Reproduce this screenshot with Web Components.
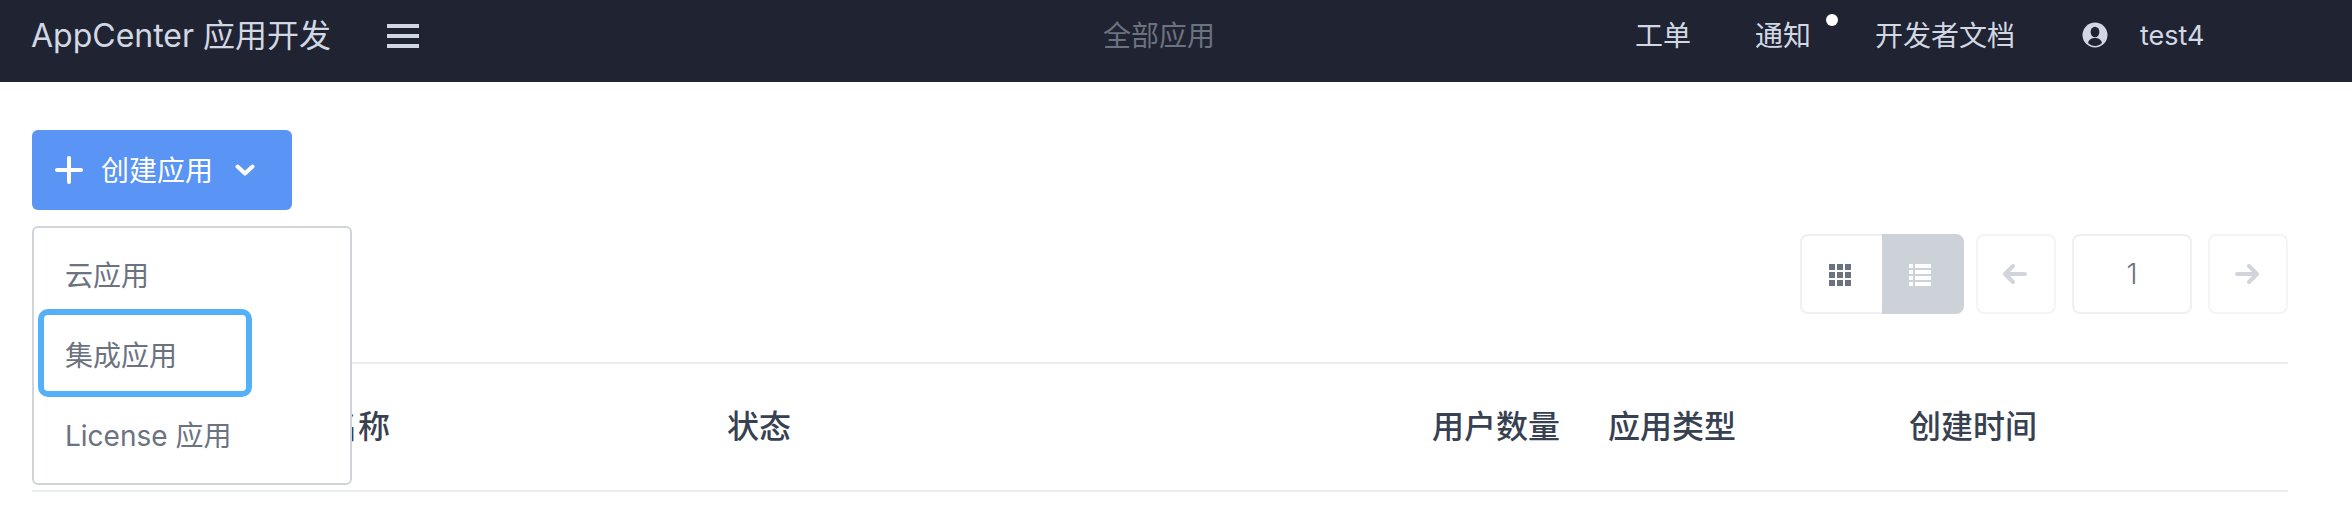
<!DOCTYPE html>
<html lang="zh"><head><meta charset="utf-8"><title>AppCenter</title>
<style>
html,body{margin:0;padding:0;background:#fff;font-family:Inter,"Noto Sans CJK SC",sans-serif;overflow:hidden}
</style></head><body>
<app-shell>
<top-bar slot="top" brand="AppCenter 应用开发" center="全部应用" user="test4"></top-bar>
<create-menu slot="main" label="创建应用"></create-menu>
<app-toolbar slot="main"></app-toolbar>
<app-table slot="main"></app-table>
</app-shell>
<script>
const def=(name,css,html,extra)=>{customElements.define(name,class extends HTMLElement{
connectedCallback(){if(this.shadowRoot)return;const r=this.attachShadow({mode:'open'});
const a=n=>this.getAttribute(n)||'';r.innerHTML='<style>'+css+'</style>'+html(a);}})};

def('app-shell',`:host{display:block;width:2352px;height:506px;overflow:hidden}
main{padding:48px 64px 0 32px;position:relative}`,
()=>`<slot name="top"></slot><main><slot name="main"></slot></main>`);

def('top-bar',`:host{display:flex;align-items:flex-start;height:82px;background:#202331;color:#d1d8e4;box-sizing:border-box;font-size:28px;line-height:34px;padding:18px 0 0 31px}
.brand{width:356px;flex:none;white-space:nowrap;font-size:32px;line-height:36px}
.burger{flex:none;width:32px;height:24px;margin:6px 0 0;display:block}
.center{flex:none;margin-left:684px;color:#6b7280;width:532px;margin-top:1px}
.links{display:flex;align-items:flex-start;margin-top:1px}
.l{flex:none;position:relative;white-space:nowrap}
.dot{position:absolute;left:71px;top:-5px;width:12px;height:12px;border-radius:50%;background:#fff}
.u{flex:none;margin:3px 0 0 67px;display:block}
.name{font-size:27px;margin-left:32px}`,
a=>`<span class="brand">${a('brand')}</span>
<svg class="burger" viewBox="0 0 32 24"><path d="M0 0h32v4H0zM0 10h32v4H0zM0 20h32v4H0z" fill="#d1d8e4"/></svg>
<span class="center">${a('center')}</span>
<div class="links"><span class="l">工单</span><span class="l" style="margin-left:64px">通知<i class="dot"></i></span><span class="l" style="margin-left:64px">开发者文档</span>
<svg class="u" width="26" height="26" viewBox="0 0 26 26"><circle cx="13" cy="13" r="12.5" fill="#d1d8e4"/><ellipse cx="13" cy="10" rx="4.4" ry="5.2" fill="#202331"/><path d="M6 21c1-4 4-5 7-5s6 1 7 5c-2 2-4.500 3-7 3s-5-1-7-3z" fill="#202331"/></svg>
<span class="l name">${a('user')}</span></div>`);

def('create-menu',`:host{display:block;position:relative;height:80px}
button{display:flex;align-items:center;width:260px;height:80px;box-sizing:border-box;border:0;border-radius:6px;background:#5a94f5;color:#fff;font:28px/34px Inter,"Noto Sans CJK SC",sans-serif;padding:0 0 0 23px}
.lab{margin:2px 22px 0 18px}
.menu{position:absolute;z-index:2;left:0;top:96px;width:320px;height:259px;box-sizing:border-box;border:2px solid #d1d5db;border-radius:6px;background:#fff;padding:1px 0 0 4px;color:#6b7280;font-size:28px;line-height:34px}
.it{box-sizing:border-box;width:214px;height:88px;padding:6px 0 0 21px;display:flex;align-items:center;margin-bottom:-8px;white-space:nowrap;border:6px solid transparent;border-radius:10px}
.on{border-color:#55b0fa}`,
a=>`<button><svg width="28" height="28" viewBox="0 0 28 28"><path d="M14 2v24M2 14h24" stroke="#fff" stroke-width="4" stroke-linecap="round"/></svg><span class="lab">${a('label')}</span><svg width="20" height="12" viewBox="0 0 20 12"><path d="M2.500 2.500L10 9.500l7.500-7" fill="none" stroke="#fff" stroke-width="4" stroke-linecap="round" stroke-linejoin="round"/></svg></button>
<div class="menu"><div class="it">云应用</div><div class="it on">集成应用</div><div class="it">License 应用</div></div>`);

def('app-toolbar',`:host{display:flex;justify-content:flex-end;gap:12px;margin-top:24px;height:80px}
.b{box-sizing:border-box;height:80px;border:2px solid #eef0f3;border-radius:8px;display:flex;align-items:center;justify-content:center;background:#fff;color:#6b7280;font-size:28px}
.g{width:164px;display:flex;height:80px}
.g div{height:80px;display:flex;align-items:center;justify-content:center;box-sizing:border-box;padding-top:2px}
.g .a{width:82px;border:2px solid #eef0f3;border-right:0;border-radius:8px 0 0 8px;padding-right:4px}
.g .c{width:82px;background:#cdd2d9;border-radius:0 8px 8px 0;padding-right:6px}
.n{width:80px;border-color:#f3f4f6;padding-right:2px}
.p{width:120px;margin:0 4px;font-weight:300}`,
()=>`<div class="g"><div class="a"><svg width="22" height="22" viewBox="0 0 22 22" fill="#6b7280"><path d="M0 0h6v6H0zM8 0h6v6H8zM16 0h6v6h-6zM0 8h6v6H0zM8 8h6v6H8zM16 8h6v6h-6zM0 16h6v6H0zM8 16h6v6H8zM16 16h6v6h-6z"/></svg></div>
<div class="c"><svg width="22" height="22" viewBox="0 0 22 22" fill="#fff"><path d="M0 0h4v4H0zM6 0h16v4H6zM0 6h4v4H0zM6 6h16v4H6zM0 12h4v4H0zM6 12h16v4H6zM0 18h4v4H0zM6 18h16v4H6z"/></svg></div></div>
<div class="b n"><svg width="24" height="20" viewBox="0 0 24 20"><path d="M22 10H3M10 2l-8 8 8 8" fill="none" stroke="#d1d5db" stroke-width="4" stroke-linecap="round" stroke-linejoin="round"/></svg></div>
<div class="b p">1</div>
<div class="b n"><svg width="24" height="20" viewBox="0 0 24 20"><path d="M2 10h19M14 2l8 8-8 8" fill="none" stroke="#d1d5db" stroke-width="4" stroke-linecap="round" stroke-linejoin="round"/></svg></div>`);

def('app-table',`:host{display:grid;grid-template-columns:294px 401px 705px 176px 301px 1fr;margin-top:48px;height:130px;box-sizing:border-box;border-top:2px solid #eaebef;border-bottom:2px solid #eaebef;align-items:center;color:#374151;line-height:40px}
span{font-size:32px;font-weight:500;white-space:nowrap}`,
()=>`<i></i><span>名称</span><span>状态</span><span>用户数量</span><span>应用类型</span><span>创建时间</span>`);
</script>
</body></html>
